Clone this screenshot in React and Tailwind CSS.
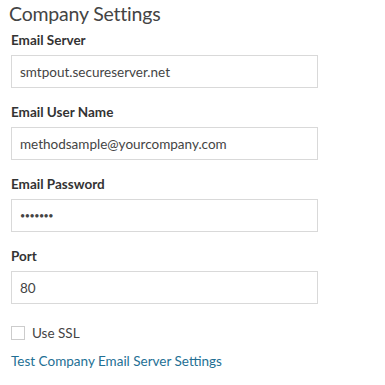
export default function App() {
  const fields = [
    { label: 'Email Server', value: 'smtpout.secureserver.net' },
    { label: 'Email User Name', value: 'methodsample@yourcompany.com' },
    { label: 'Email Password', value: '•••••••', small: true },
    { label: 'Port', value: '80' },
  ]

  return (
    <div className="w-[385px] h-[385px] bg-white text-[#333] font-['Lato',sans-serif] pl-[11px] pt-[1px]">
      <h1 className="text-[19.5px] leading-[25px] tracking-[-0.2px] text-[#444] -ml-[2px]">Company Settings</h1>

      {fields.map((f) => (
        <div key={f.label} className="flex flex-col">
          <label className="mt-[5px] text-[13.5px] font-bold leading-[18px] text-[#333]">{f.label}</label>
          <input
            readOnly
            type="text"
            defaultValue={f.value}
            className={`mt-[6px] mb-[10px] h-[33px] w-[307px] border border-[#d9d9d9] px-[8px] text-[#444] outline-none ${f.small ? 'text-[9px] tracking-[-0.5px]' : 'text-[13.5px]'}`}
          />
        </div>
      ))}

      {/* SSL checkbox */}
      <label className="flex items-center gap-[7px] mt-[9px] text-[13.5px] text-[#444]">
        <span className="w-[14px] h-[14px] border border-[#ccc] bg-white" />
        Use SSL
      </label>

      <a href="#" className="block mt-[8px] text-[13.5px] text-[#236f94]">Test Company Email Server Settings</a>
    </div>
  )
}
